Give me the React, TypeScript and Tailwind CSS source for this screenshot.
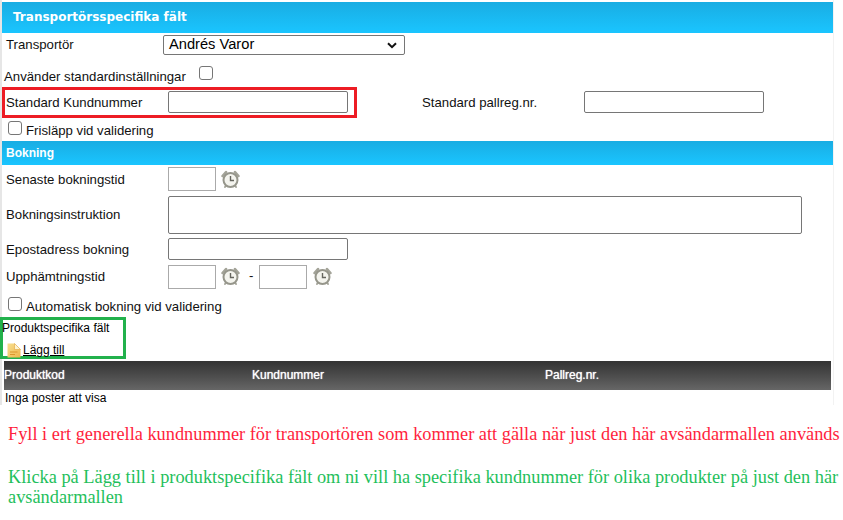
const arial = 'font-["Liberation_Sans",Arial,sans-serif]';

function Clock() {
  return (
    <svg width="19" height="19" viewBox="0 0 19 19" className="shrink-0">
      <path d="M1.5 6 L5 2 M17.5 6 L14 2" stroke="#a3a398" strokeWidth="2.5" strokeLinecap="round" />
      <path d="M4 17 L5.5 15 M15 17 L13.5 15" stroke="#a3a398" strokeWidth="2" strokeLinecap="round" />
      <circle cx="9.5" cy="10" r="7" fill="#f4f4ee" stroke="#96968b" strokeWidth="2" />
      <path d="M9.5 6 V10.5 H13" fill="none" stroke="#66665f" strokeWidth="1.4" />
    </svg>
  );
}

function TimeInput() {
  return <input className="w-12 h-6 border border-[#aaaaaa] bg-white" />;
}

function Field({ className }: { className: string }) {
  return <input className={`border border-[#767676] rounded-[2px] bg-white ${className}`} />;
}

function Check() {
  return <span className="block w-[14px] h-[14px] border border-[#767676] rounded-[3px] bg-white shrink-0" />;
}

export default function App() {
  return (
    <div className={`w-[843px] h-[520px] bg-white overflow-hidden text-[13.2px] leading-[15px] text-[#111] ${arial}`}>
      <div className="w-[834px] h-[405px] border-l-2 border-r border-l-[#e6e6e6] border-r-[#f2f2f2]">
        <div className="h-[2px]" />
        <div className="h-[31px] pl-[11px] flex items-center bg-gradient-to-b from-[#19ade3] to-[#1ac5ff] text-white font-bold text-[12px] font-['DejaVu_Sans',sans-serif]">
          Transportörsspecifika fält
        </div>

        <div className="h-[28px] flex items-start pl-1 pt-[2px]">
          <span className="w-[157px] pt-[2px]">Transportör</span>
          <div className="w-[242px] h-[20px] border border-[#767676] rounded-[2px] flex items-center justify-between pl-[5px] pr-[7px] text-[14.67px] text-black">
            <span className="-mt-[1px]">Andrés Varor</span>
            <svg width="10" height="7" viewBox="0 0 10 7">
              <path d="M1 1.2 L5 5.2 L9 1.2" fill="none" stroke="#111" strokeWidth="2" />
            </svg>
          </div>
        </div>

        <div className="h-[26px] flex items-start pl-[2px]">
          <span className="w-[195px] pt-[8px]">Använder standardinställningar</span>
          <span className="mt-[5px]">
            <Check />
          </span>
        </div>

        <div className="h-[31px] flex items-center">
          <div className="w-[355px] h-[31px] border-[3px] border-[#ed1c24] flex items-center pl-[1px]">
            <span className="w-[162px]">Standard Kundnummer</span>
            <Field className="w-[180px] h-[22px] -mt-[1px]" />
          </div>
          <span className="ml-[65px] w-[162px]">Standard pallreg.nr.</span>
          <Field className="w-[180px] h-[22px] -mt-[1px]" />
        </div>

        <div className="h-[23px] flex items-start pl-[6px] pt-[3px]">
          <Check />
          <span className="ml-[4px] pt-[2px]">Frisläpp vid validering</span>
        </div>

        <div className="h-[24px] pl-1 flex items-center bg-gradient-to-b from-[#19ade3] to-[#1ac5ff] text-white font-bold text-[12px]">
          Bokning
        </div>

        <div className="h-[29px] flex items-start pl-1 pt-[2px]">
          <span className="w-[162px] pt-[5px]">Senaste bokningstid</span>
          <TimeInput />
          <span className="ml-[5px] mt-[3px]">
            <Clock />
          </span>
        </div>

        <div className="h-[44px] flex items-start pl-1 pt-[2px]">
          <span className="w-[162px] pt-[11px]">Bokningsinstruktion</span>
          <Field className="w-[634px] h-[38px]" />
        </div>

        <div className="h-[27px] flex items-start pl-1">
          <span className="w-[162px] pt-[4px]">Epostadress bokning</span>
          <Field className="w-[180px] h-[22px]" />
        </div>

        <div className="h-[28px] flex items-start pl-1">
          <span className="w-[162px] pt-[4px]">Upphämtningstid</span>
          <TimeInput />
          <span className="ml-[5px] mt-[2px]">
            <Clock />
          </span>
          <span className="ml-[9px] w-[10px] pt-[3px]">-</span>
          <TimeInput />
          <span className="ml-[6px] mt-[2px]">
            <Clock />
          </span>
        </div>

        <div className="h-[24px] flex items-start pl-[6px] pt-[4px]">
          <Check />
          <span className="ml-[4px] pt-[2px]">Automatisk bokning vid validering</span>
        </div>

        <div className="w-[126px] h-[42px] -ml-[2px] border-[3px] border-[#22b14c] text-[12px] text-black">
          <div className="pt-[1px]">
            <span className="-ml-px">Produktspecifika fält</span>
          </div>
          <div className="flex items-center pl-[4px] mt-[7px]">
            <svg width="14" height="15" viewBox="0 0 14 15" className="shrink-0">
              <defs>
                <linearGradient id="doc" x1="0" y1="0" x2="1" y2="1">
                  <stop offset="0" stopColor="#f8e08f" />
                  <stop offset="1" stopColor="#eeb44a" />
                </linearGradient>
              </defs>
              <path d="M0.5 0.5 H7.5 L13.5 6.5 V14.5 H0.5 Z" fill="url(#doc)" />
              <path d="M7.5 0.5 L13.5 6.5 H7.5 Z" fill="#fdf3cf" stroke="#e3a63f" strokeWidth="0.6" />
              <path d="M3 9 H10.5 M3 11.5 H8" stroke="#d9962c" strokeWidth="1" />
            </svg>
            <a className="ml-[2px] underline">Lägg till</a>
          </div>
        </div>

        <div className="h-[2px]" />
        <div className="ml-[2px] w-[827px] h-[29px] flex items-center bg-gradient-to-b from-[#333333] to-[#666666] text-white text-[12px] [text-shadow:0_0_1px_#fff]">
          <span className="w-[248px]">Produktkod</span>
          <span className="w-[293px]">Kundnummer</span>
          <span>Pallreg.nr.</span>
        </div>
        <div className="pl-[3px] pt-[1px] text-[12px] text-black">Inga poster att visa</div>
      </div>

      <div className="pl-2 pt-[19px] font-['Liberation_Serif','Times_New_Roman',serif] text-[18.33px] leading-[20px]">
        <p className="text-[#ff1f3d] whitespace-nowrap">
          Fyll i ert generella kundnummer för transportören som kommer att gälla när just den här avsändarmallen används
        </p>
        <p className="mt-[23px] text-[#1fbf5c] w-[835px]">
          Klicka på Lägg till i produktspecifika fält om ni vill ha specifika kundnummer för olika produkter på just den här avsändarmallen
        </p>
      </div>
    </div>
  );
}
